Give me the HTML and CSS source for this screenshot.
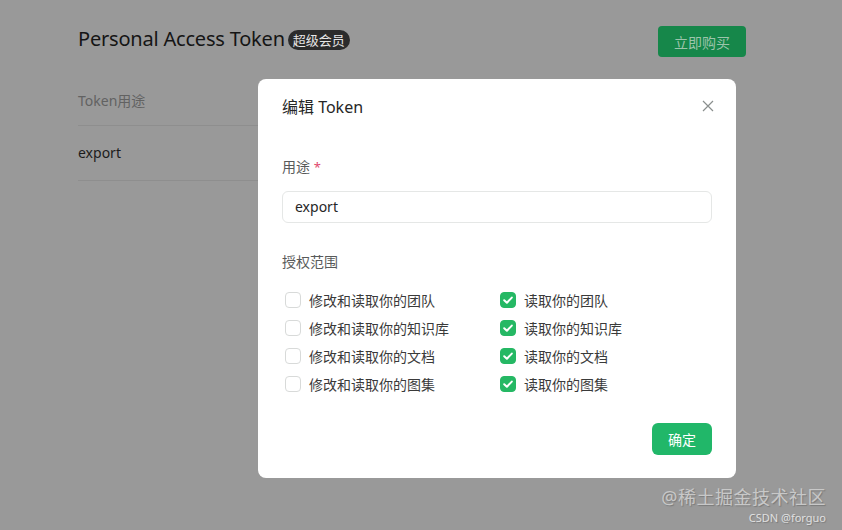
FILE: index.html
```html
<!DOCTYPE html>
<html lang="zh-CN">
<head>
<meta charset="utf-8">
<link rel="stylesheet" href="styles.css">
</head>
<body>
<div class="page">
  <div class="page-head">
    <div class="page-title">Personal Access Token <span class="badge">超级会员</span></div>
    <button class="buy">立即购买</button>
  </div>
  <div class="table">
    <div class="row th">Token用途</div>
    <div class="row td">export</div>
  </div>
</div>

<div class="mask">
  <div class="modal">
    <div class="modal-head">
      <span class="modal-title">编辑 Token</span>
      <svg class="close" width="12" height="12" viewBox="0 0 12 12"><path d="M1 1L11 11M11 1L1 11" stroke="#8a8f8d" stroke-width="1.2" fill="none"/></svg>
    </div>
    <div class="field">
      <div class="label">用途 <span class="req">*</span></div>
      <div class="input">export</div>
    </div>
    <div class="field scope">
      <div class="label">授权范围</div>
      <div class="grid">
        <label class="cb"><span class="box"></span>修改和读取你的团队</label>
        <label class="cb"><span class="box on"><svg width="16" height="16" viewBox="0 0 16 16"><path d="M4.2 8.2L6.9 10.8L11.8 5.6" stroke="#fff" stroke-width="2" fill="none" stroke-linecap="round" stroke-linejoin="round"/></svg></span>读取你的团队</label>
        <label class="cb"><span class="box"></span>修改和读取你的知识库</label>
        <label class="cb"><span class="box on"><svg width="16" height="16" viewBox="0 0 16 16"><path d="M4.2 8.2L6.9 10.8L11.8 5.6" stroke="#fff" stroke-width="2" fill="none" stroke-linecap="round" stroke-linejoin="round"/></svg></span>读取你的知识库</label>
        <label class="cb"><span class="box"></span>修改和读取你的文档</label>
        <label class="cb"><span class="box on"><svg width="16" height="16" viewBox="0 0 16 16"><path d="M4.2 8.2L6.9 10.8L11.8 5.6" stroke="#fff" stroke-width="2" fill="none" stroke-linecap="round" stroke-linejoin="round"/></svg></span>读取你的文档</label>
        <label class="cb"><span class="box"></span>修改和读取你的图集</label>
        <label class="cb"><span class="box on"><svg width="16" height="16" viewBox="0 0 16 16"><path d="M4.2 8.2L6.9 10.8L11.8 5.6" stroke="#fff" stroke-width="2" fill="none" stroke-linecap="round" stroke-linejoin="round"/></svg></span>读取你的图集</label>
      </div>
    </div>
    <div class="modal-foot">
      <button class="ok">确定</button>
    </div>
  </div>
</div>

<div class="watermark">
  <div class="wm1">@稀土掘金技术社区</div>
  <div class="wm2">CSDN @forguo</div>
</div>
</body>
</html>
```

FILE: styles.css
```css
* { box-sizing: border-box; }
html, body { margin: 0; padding: 0; }
body {
  width: 842px;
  height: 530px;
  overflow: hidden;
  background: #999999;
  font-family: "Noto Sans", "Noto Sans CJK SC", sans-serif;
  position: relative;
}
.page {
  padding: 26px 96px 0 78px;
}
.page-head {
  display: flex;
  justify-content: space-between;
  align-items: flex-start;
  height: 33px;
}
.page-title {
  font-size: 20px;
  line-height: 26px;
  color: #151515;
  display: flex;
  align-items: center;
  gap: 3px;
  letter-spacing: -0.2px;
}
.badge {
  background: #2b2b2b;
  color: #e6e6e6;
  font-size: 13px;
  height: 20px;
  line-height: 20px;
  padding: 0 5px;
  border-radius: 10px;
  margin-top: 1px;
  letter-spacing: 0;
}
.buy {
  width: 88px;
  height: 31px;
  border: none;
  border-radius: 4px;
  background: #16874a;
  color: #9cc4ab;
  font-size: 14px;
  font-family: inherit;
  padding: 0;
}
.table { margin-top: 21px; width: 540px; }
.row {
  height: 56px;
  line-height: 44px;
  font-size: 14px;
  border-bottom: 1px solid #8e8e8e;
}
.th { color: #626262; height: 46px; line-height: 42px; }
.td { color: #1c1c1c; height: 55px; line-height: 54px; }

.mask {
  position: absolute;
  inset: 0;
  display: flex;
  justify-content: flex-start;
  align-items: flex-start;
  padding-top: 79px;
  padding-left: 258px;
}
.modal {
  width: 478px;
  height: 399px;
  background: #fff;
  border-radius: 8px;
  padding: 16px 24px 23px 24px;
  display: flex;
  flex-direction: column;
}
.modal-head {
  display: flex;
  justify-content: space-between;
  align-items: center;
  height: 22px;
}
.modal-title { font-size: 16px; color: #262626; }
.close { margin-right: -2px; }
.field { margin-top: 39px; }
.label { font-size: 14px; color: #585a5a; line-height: 22px; }
.req { color: #e0476d; font-size: 13px; }
.input {
  margin-top: 13px;
  height: 32px;
  border: 1px solid #e5e7e6;
  border-radius: 6px;
  padding: 0 12px;
  font-size: 14px;
  line-height: 30px;
  color: #262626;
}
.scope { margin-top: 28px; }
.grid {
  margin-top: 16px;
  display: grid;
  grid-template-columns: 215px 1fr;
  row-gap: 6px;
}
.cb {
  display: flex;
  align-items: center;
  height: 22px;
  font-size: 14px;
  color: #3a3a3a;
  padding-left: 3px;
}
.box {
  width: 16px;
  height: 16px;
  border: 1px solid #d8dad9;
  border-radius: 4px;
  margin-right: 8px;
  background: #fff;
  display: flex;
}
.box.on {
  background: #25b864;
  border-color: #25b864;
}
.box.on svg { margin: -1px; }
.modal-foot {
  margin-top: auto;
  display: flex;
  justify-content: flex-end;
}
.ok {
  width: 60px;
  height: 32px;
  border: none;
  border-radius: 6px;
  background: #21b769;
  color: #fff;
  font-size: 14px;
  font-family: inherit;
  padding: 0;
}
.watermark {
  position: absolute;
  right: 16px;
  bottom: 6px;
  text-align: right;
  color: #c8c8c8;
  text-shadow: 1px 1px 1px #7a7a7a;
}
.wm1 { font-size: 18px; line-height: 22px; letter-spacing: 0.5px; }
.wm2 { font-size: 11px; line-height: 12px; color: #e0e0e0; margin-top: 4px; }
```
